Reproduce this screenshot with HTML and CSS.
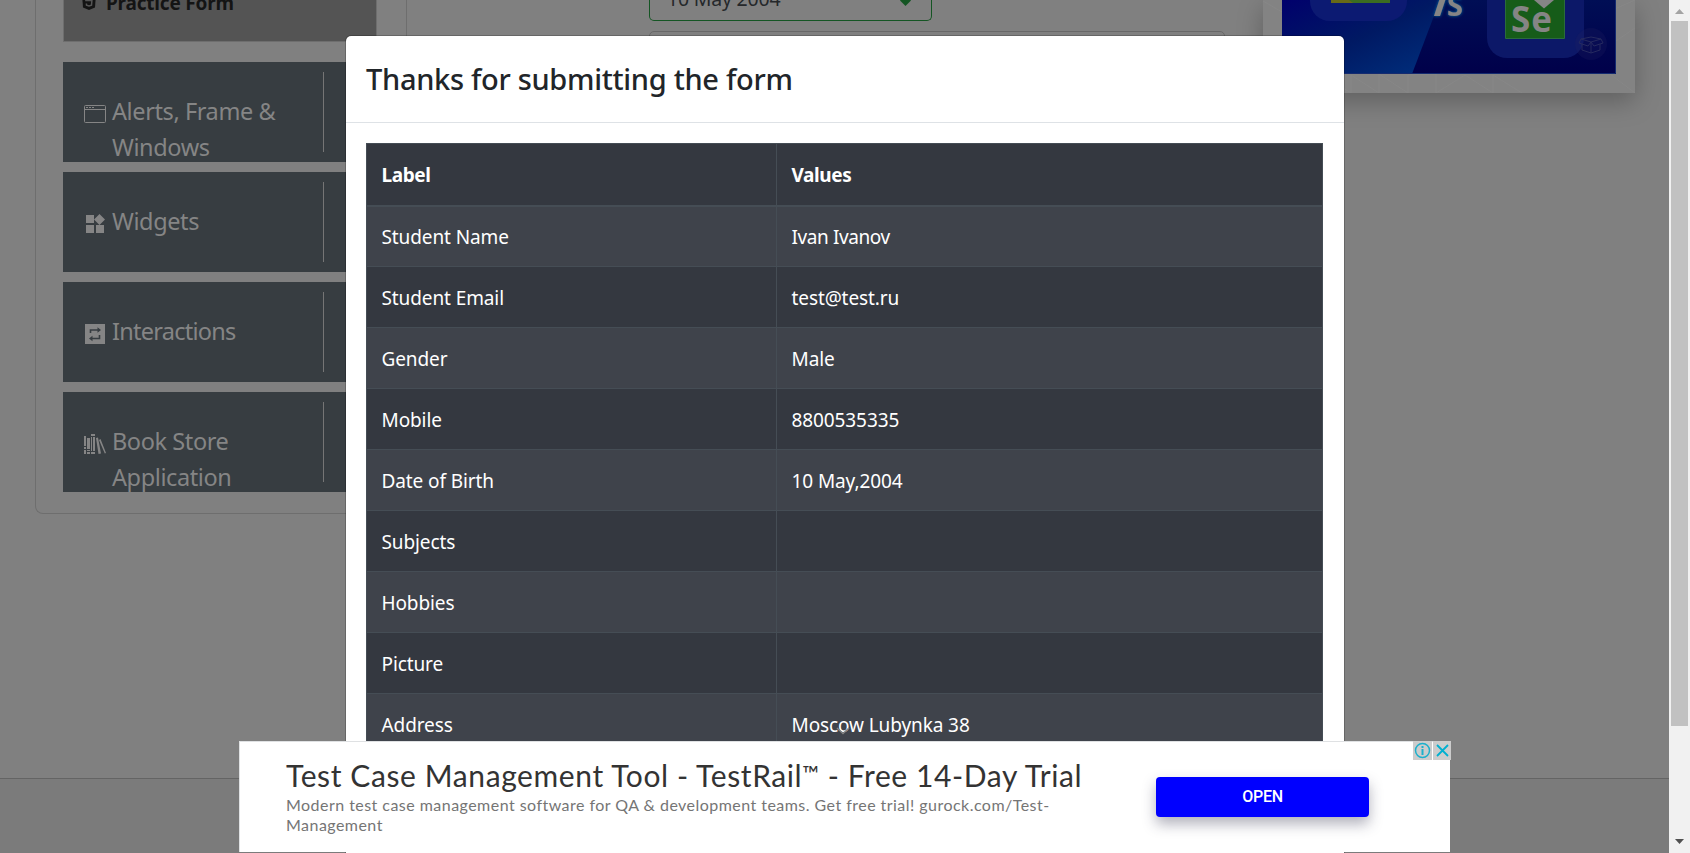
FILE: index.html
```html
<!DOCTYPE html>
<html lang="en">
<head>
<meta charset="utf-8">
<title>Practice Form</title>
<link rel="stylesheet" href="styles.css">
</head>
<body>
<div class="page">
  <main class="columns">
    <aside class="sidebar">
      <div class="current">
        <svg class="html-icon" width="14" height="16" viewBox="0 0 14 16"><path d="M0 0h14l-1 13.500-6 2.500-6-2.500z" fill="#141414"/><path d="M10.500 3H3.500l.4 3.500h6l-.4 4.700-2.500.8-2.500-.8-.1-1.700" fill="none" stroke="#555" stroke-width="1.500"/></svg>
        <span>Practice Form</span>
      </div>
      <nav class="menu">
        <div class="group"><div class="group-label">
          <svg class="icon" width="22" height="20" viewBox="0 0 22 20"><g fill="none" stroke="#858585" stroke-width="1"><rect x=".5" y="1.500" width="21" height="17" rx="1"/><path d="M1 5.500h20"/></g><path d="M2 3h2v1H2zM5 3h2v1H5zM8 3h2v1H8z" fill="#858585"/></svg>
          <span>Alerts, Frame &amp;<br>Windows</span></div></div>
        <div class="group"><div class="group-label">
          <svg class="icon" width="22" height="20" viewBox="0 0 22 20"><path d="M2 1h8v8H2zM2 11h8v8H2zM12 11h8v8h-8zM15.500 0l5.500 5.500-5.500 5.500L10 5.500z" fill="#858585"/></svg>
          <span>Widgets</span></div></div>
        <div class="group"><div class="group-label">
          <svg class="icon" width="22" height="20" viewBox="0 0 22 20"><path d="M1 0h20v20H1z" fill="#858585"/><path d="M6.500 9V6h8M15.500 11v3.500h-8" fill="none" stroke="#373d41" stroke-width="1.600"/><path d="M13.500 3.300L17 6l-3.500 2.700zM8.500 11.700L5 14.500 8.500 17.200z" fill="#373d41"/></svg>
          <span class="snug">Interactions</span></div></div>
        <div class="group"><div class="group-label">
          <svg class="icon" width="22" height="20" viewBox="0 0 22 20"><path d="M0 2h2v10H0zM0 13h2v2H0zM0 16h2v4H0zM3 4h3v11H3zM3 16h3v1H3zM3 18h3v2H3zM7 0h4v2H7zM7 3h1v14H7zM9 3h2v14H9zM7 18h4v2H7zM12 4l2-.5 3 16-2.500.5zM15 6l1.500-1L22 19l-1.200.6z" fill="#858585"/></svg>
          <span>Book Store<br>Application</span></div></div>
      </nav>
    </aside>
    <section class="form">
      <div class="field date"><span>10 May 2004</span><svg width="11" height="12" viewBox="0 0 11 12"><path d="M5.500 0L11 6.500 5.500 12 0 6.500z" fill="#145523"/></svg></div>
      <div class="field subjects"></div>
    </section>
    <aside class="promo">
      <svg class="pattern" width="372" height="93" viewBox="0 0 372 93"><path d="M0 1l19 11M60 75L88 93V75l28 18V74l29 19V75l28-1 0 19 29-18 28 18V75l29 18M345 12l27-12M347 74l25 19M347 45l25-17" fill="none" stroke="#878787"/></svg>
      <svg class="banner" width="334" height="74" viewBox="0 0 334 74">
        <defs>
          <linearGradient id="left" x1="0" y1="0" x2="1" y2="1"><stop offset="0" stop-color="#00006c"/><stop offset=".5" stop-color="#001963"/><stop offset="1" stop-color="#00307e"/></linearGradient>
          <linearGradient id="right" x1="0" y1="0" x2="0" y2="1"><stop offset="0" stop-color="#000e55"/><stop offset="1" stop-color="#00004a"/></linearGradient>
          <filter id="glow" x="-30%" y="-30%" width="160%" height="160%"><feDropShadow dx="0" dy="0" stdDeviation="1.500" flood-color="#0078a0"/></filter>
        </defs>
        <rect width="334" height="74" fill="url(#right)"/>
        <path d="M0 0h158l-28 74H0z" fill="url(#left)"/>
        <path d="M28-20h97V1a20 20 0 0 1-20 20H48A20 20 0 0 1 28 1z" fill="#0c1a72"/>
        <path d="M49 0h59v3H49z" fill="#3b6d20"/><path d="M49 0h18l4 3H49z" fill="#686a16"/>
        <g filter="url(#glow)"><path d="M152 16l6-18h6l-6 18z" fill="#858585"/><text class="versus" x="165" y="16">S</text></g>
        <path d="M205-20h97v58a20 20 0 0 1-20 20h-57a20 20 0 0 1-20-20z" fill="#0c1868"/>
        <path d="M223.500-5h59v43.500h-59z" fill="#165c19" stroke="#2b6b3c"/>
        <path d="M252 0h20l-10 8.500z" fill="#858585"/>
        <text class="selenium" x="229" y="32">Se</text>
        <circle cx="309" cy="44" r="16" fill="#202060" opacity=".25"/>
        <path d="M299 39l10 3 10-3 2 4-9 3-3-4-3 4-9-3zM299 39l10-2 10 2M300 44v6l9 3 9-3v-6M309 42v11" fill="none" stroke="#25295f"/>
        <path d="M0 73.500h333.500V0" fill="none" stroke="#152b70"/>
      </svg>
    </aside>
  </main>
  <footer class="footer"></footer>
</div>

<div class="modal">
  <header class="modal-head">Thanks for submitting the form</header>
  <div class="modal-body">
    <table class="results">
      <thead><tr><th class="c1">Label</th><th>Values</th></tr></thead>
      <tbody>
        <tr><td>Student Name</td><td class="snug">Ivan Ivanov</td></tr>
        <tr><td>Student Email</td><td>test@test.ru</td></tr>
        <tr><td>Gender</td><td>Male</td></tr>
        <tr><td>Mobile</td><td>8800535335</td></tr>
        <tr><td>Date of Birth</td><td>10 May,2004</td></tr>
        <tr><td>Subjects</td><td></td></tr>
        <tr><td>Hobbies</td><td></td></tr>
        <tr><td>Picture</td><td></td></tr>
        <tr><td>Address</td><td>Moscow Lubynka 38</td></tr>
      </tbody>
    </table>
  </div>
</div>

<svg class="chevron" width="14" height="8" viewBox="0 0 14 8"><path d="M1 1l6 5.500L13 1" fill="none" stroke="#858585" stroke-width="1.500"/></svg>

<div class="ad">
  <div class="ad-copy">
    <div class="ad-title">Test Case Management Tool - TestRail<span class="tm">™</span> - Free 14-Day Trial</div>
    <div class="ad-text">Modern test case management software for QA &amp; development teams. Get free trial! gurock.com/Test-<br>Management</div>
  </div>
  <div class="ad-button">OPEN</div>
  <div class="ad-choices">
    <svg width="19" height="19" viewBox="0 0 19 19"><circle cx="9.500" cy="9.500" r="7" fill="none" stroke="#1cb0cc" stroke-width="1.500"/><path d="M8.500 5h2v2h-2zM8.500 8h2v6h-2z" fill="#1cb0cc"/></svg>
    <svg width="18" height="19" viewBox="0 0 18 19"><path d="M4 4l11 11M15 4L4 15" stroke="#00b0d0" stroke-width="1.800"/></svg>
  </div>
</div>

<div class="scrollbar">
  <svg width="21" height="21" viewBox="0 0 21 21"><path d="M6 14l4.500-5 4.500 5z" fill="#a3a3a3"/></svg>
  <div class="thumb"></div>
  <svg class="down" width="21" height="17" viewBox="0 0 21 17"><path d="M6 3h9l-4.500 5z" fill="#505050"/></svg>
</div>
</body>
</html>
```
FILE: styles.css
```css
* { box-sizing: border-box; }
body { margin: 0; width: 1690px; height: 853px; overflow: hidden; position: relative; background: #808080; font-family: "Noto Sans", "Open Sans", sans-serif; font-size: 19px; color: #fff; }
svg { display: block; flex: none; }
.page { width: 1669px; height: 853px; display: flex; flex-direction: column; overflow: hidden; }
.columns { height: 778px; display: flex; align-items: flex-start; flex: none; }

.sidebar { width: 342px; height: 514px; margin-left: 35px; padding: 0 0 0 27px; border: 1px solid #6e6e6e; border-top: 0; border-right: 0; border-radius: 0 0 0 8px; flex: none; }
.current { width: 314px; height: 42px; background: #545454; border: 1px solid #6e6e6e; border-top: 0; display: flex; align-items: flex-start; color: #141414; font-weight: 700; line-height: 28px; white-space: nowrap; }
.current span { margin: -11px 0 0 10px; letter-spacing: -.2px; }
.html-icon { margin: -6px 0 0 18px; }
.menu { margin-top: 20px; display: flex; flex-direction: column; gap: 10px; }
.group { width: 314px; height: 100px; padding: 10px 0; background: #373d41; overflow: hidden; }
.group-label { width: 261px; height: 80px; padding: 21px 0 0 21px; border-right: 1px solid #757575; display: flex; gap: 6px; color: #858585; font-size: 23.500px; line-height: 36px; white-space: nowrap; }
.group-label span { letter-spacing: -.4px; }
.group-label .snug { letter-spacing: -.75px; }
.icon { margin-top: 11px; }

.form { width: 857px; height: 778px; margin-left: 29px; border-left: 1px solid #6e6e6e; padding-left: 242px; flex: none; }
.field { border: 1px solid #686868; border-radius: 5px; }
.date { width: 283px; height: 21px; border-color: #145523; border-top: 0; border-radius: 0 0 5px 5px; padding: 0 20px 0 17px; display: flex; justify-content: space-between; color: #25282b; line-height: 28px; }
.date span { margin-top: -15px; font-size: 19.500px; letter-spacing: -.2px; white-space: nowrap; }
.date svg { margin-top: -6px; }
.subjects { width: 576px; height: 42px; margin-top: 10px; }

.promo { width: 372px; height: 93px; background: #838383; display: grid; box-shadow: 0 8px 24px rgba(0,0,0,.26); flex: none; }
.pattern, .banner { grid-area: 1 / 1; }
.banner { margin-left: 19px; }
.selenium { font: 700 35px "Open Sans", sans-serif; fill: #858585; letter-spacing: 1px; }
.versus { font: 700 29px "Open Sans", sans-serif; fill: #858585; }
.footer { flex: 1; background: #7b7b7b; border-top: 1px solid #646464; }

.modal { position: absolute; left: 345px; top: 35px; width: 1000px; height: 818px; background: #fff; background-clip: padding-box; border: 1px solid rgba(0,0,0,.2); border-bottom: 0; border-radius: 6px 6px 0 0; overflow: hidden; }
.modal-head { height: 87px; padding-left: 20px; border-bottom: 1px solid #dee2e6; color: #212529; font-size: 29px; font-weight: 500; letter-spacing: -.3px; line-height: 85px; white-space: nowrap; }
.modal-body { padding: 20px 20px 0; }
.results { width: 957px; border-collapse: collapse; table-layout: fixed; background: #343840; border: 1px solid #454d55; line-height: 30px; letter-spacing: -.1px; }
.results th, .results td { height: 61px; padding: 2px 15px 0 14.500px; border: 1px solid #454d55; text-align: left; white-space: nowrap; }
.results .c1 { width: 410px; }
.results th { font-weight: 700; height: 62px; border-bottom-width: 2px; letter-spacing: -.4px; }
.results thead tr { height: 61px; }
.results .snug { letter-spacing: -.4px; }
.results tbody tr:nth-child(odd) { background: #3f434b; }
.chevron { position: absolute; left: 836px; top: 727px; }

.ad { position: absolute; left: 239px; top: 741px; width: 1211px; height: 111px; background: #fff; border: 1px solid #dfe1e3; border-width: 1px 0 0 1px; display: flex; align-items: flex-start; }
.ad-copy { width: 870px; margin-left: 46px; padding-top: 13px; flex: none; font-family: Lato, sans-serif; white-space: nowrap; }
.ad-title { height: 40px; line-height: 40px; font-size: 30px; letter-spacing: .6px; color: #333; }
.tm { font-size: 22px; position: relative; top: -5px; line-height: 1; }
.ad-text { font-size: 16px; line-height: 20px; letter-spacing: .46px; color: #757575; }
.ad-button { width: 213px; height: 40px; margin-top: 35px; border-radius: 4px; background: #00f; box-shadow: 0 7px 14px rgba(50,50,80,.38); font: 500 16px/39px Roboto, sans-serif; letter-spacing: -.3px; text-align: center; }
.ad-choices { position: absolute; right: -1px; top: -1px; display: flex; gap: 1px; }
.ad-choices svg { background: #ccc; }

.scrollbar { position: absolute; right: 0; top: 0; width: 21px; height: 853px; background: #f1f1f1; display: flex; flex-direction: column; }
.thumb { width: 17px; height: 705px; margin-left: 2px; background: #c1c1c1; }
.down { margin-top: auto; }
```
